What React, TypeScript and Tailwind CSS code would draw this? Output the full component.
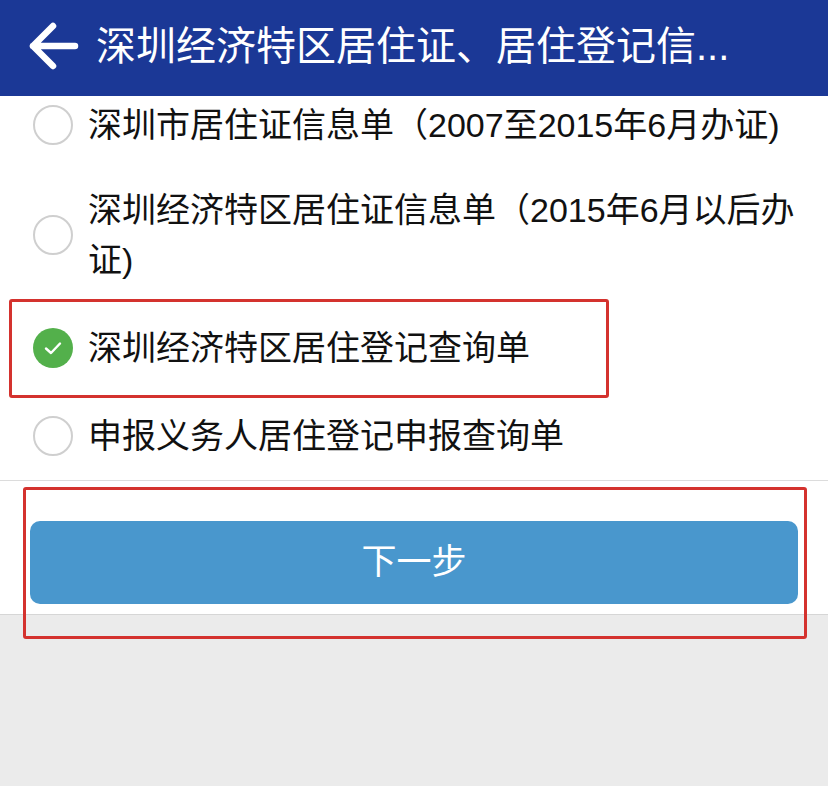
import { useState } from "react";

const FONT = { fontFamily: '"Liberation Sans", "Noto Sans CJK SC", sans-serif' };

const OPTIONS = [
  { id: 0, label: "深圳市居住证信息单（2007至2015年6月办证)" },
  { id: 1, label: "深圳经济特区居住证信息单（2015年6月以后办证)" },
  { id: 2, label: "深圳经济特区居住登记查询单" },
  { id: 3, label: "申报义务人居住登记申报查询单" },
];

function Radio({ checked }: { checked: boolean }) {
  if (checked) {
    return (
      <span className="w-[40px] h-[40px] rounded-full bg-[#53b04b] flex items-center justify-center shrink-0">
        <svg width="20" height="16" viewBox="0 0 20 16" fill="none">
          <path d="M3 8.5 L8 13 L17 3.5" stroke="white" strokeWidth="2.4" strokeLinecap="round" strokeLinejoin="round" />
        </svg>
      </span>
    );
  }
  return <span className="w-[40px] h-[40px] rounded-full border-2 border-[#cfcfcf] bg-white shrink-0" />;
}

export default function App() {
  const [selected, setSelected] = useState(2);

  return (
    <div className="min-h-screen bg-[#ebebeb] relative" style={FONT}>
      {/* Header */}
      <div className="h-[96px] bg-[#1b3896] flex items-center pl-[27px] pr-4 text-white">
        <svg width="52" height="48" viewBox="0 0 52 48" fill="none" className="shrink-0 -mt-[4px]">
          <path d="M6 24 H48 M26 4 L6 24 L26 44" stroke="white" strokeWidth="6.5" strokeLinecap="round" strokeLinejoin="round" />
        </svg>
        <h1 className="ml-[17px] text-[40px] leading-none font-normal whitespace-nowrap pb-[4px]">
          深圳经济特区居住证、居住登记信...
        </h1>
      </div>

      {/* Options */}
      <div className="bg-white border-b border-[#dcdcdc]">
        {OPTIONS.map((o, i) => (
          <button
            key={o.id}
            onClick={() => setSelected(o.id)}
            className={`w-full flex items-center text-left pl-[33px] pr-[20px] ${
              i === 0 ? "h-[70px] pb-[12px]" : o.id === 1 ? "h-[138px]" : "h-[88px]"
            }`}
          >
            <Radio checked={selected === o.id} />
            <span className="ml-[15px] text-[34px] leading-[50px] text-[#111]">{o.label}</span>
          </button>
        ))}
      </div>

      {/* Next button */}
      <div className="bg-white pt-[40px] pb-[10px] px-[30px] border-b border-[#d6d6d6]">
        <button className="w-full h-[83px] rounded-[10px] bg-[#4997cd] text-white text-[35px] font-normal">
          下一步
        </button>
      </div>

      {/* Annotation boxes */}
      <div className="absolute left-[9px] top-[299px] w-[600px] h-[99px] border-[3px] border-[#d4322e] rounded-[3px] pointer-events-none" />
      <div className="absolute left-[23px] top-[487px] w-[784px] h-[152px] border-[3px] border-[#d4322e] rounded-[3px] pointer-events-none" />
    </div>
  );
}
